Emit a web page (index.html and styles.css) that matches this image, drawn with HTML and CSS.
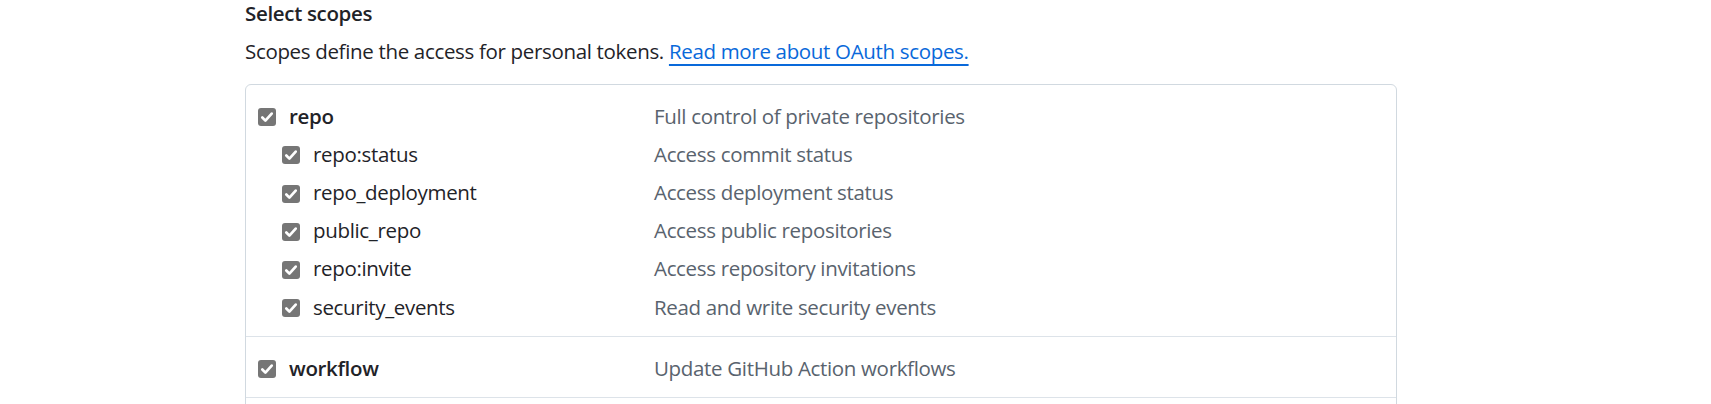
FILE: index.html
```html
<!DOCTYPE html>
<html lang="en">
<head>
<meta charset="utf-8">
<title>Select scopes</title>
<link rel="stylesheet" href="styles.css">
</head>
<body>
<main class="page">
  <section class="scopes">
    <h3 class="scopes-title">Select scopes</h3>
    <p class="scopes-note">Scopes define the access for personal tokens. <a href="#" class="link">Read more about OAuth scopes.</a></p>
    <div class="scope-box">
      <div class="scope-group">
        <div class="scope-row">
          <label class="scope-name parent"><span class="cb"><svg viewBox="0 0 18 18" width="18" height="18"><path d="M4.3 9.5 L7.4 12.6 L13.7 5.6" fill="none" stroke="#fff" stroke-width="2.7" stroke-linecap="round" stroke-linejoin="round"/></svg></span>repo</label>
          <span class="scope-desc">Full control of private repositories</span>
        </div>
        <div class="scope-row">
          <label class="scope-name child"><span class="cb"><svg viewBox="0 0 18 18" width="18" height="18"><path d="M4.3 9.5 L7.4 12.6 L13.7 5.6" fill="none" stroke="#fff" stroke-width="2.7" stroke-linecap="round" stroke-linejoin="round"/></svg></span>repo:status</label>
          <span class="scope-desc">Access commit status</span>
        </div>
        <div class="scope-row">
          <label class="scope-name child"><span class="cb"><svg viewBox="0 0 18 18" width="18" height="18"><path d="M4.3 9.5 L7.4 12.6 L13.7 5.6" fill="none" stroke="#fff" stroke-width="2.7" stroke-linecap="round" stroke-linejoin="round"/></svg></span>repo_deployment</label>
          <span class="scope-desc">Access deployment status</span>
        </div>
        <div class="scope-row">
          <label class="scope-name child"><span class="cb"><svg viewBox="0 0 18 18" width="18" height="18"><path d="M4.3 9.5 L7.4 12.6 L13.7 5.6" fill="none" stroke="#fff" stroke-width="2.7" stroke-linecap="round" stroke-linejoin="round"/></svg></span>public_repo</label>
          <span class="scope-desc">Access public repositories</span>
        </div>
        <div class="scope-row">
          <label class="scope-name child"><span class="cb"><svg viewBox="0 0 18 18" width="18" height="18"><path d="M4.3 9.5 L7.4 12.6 L13.7 5.6" fill="none" stroke="#fff" stroke-width="2.7" stroke-linecap="round" stroke-linejoin="round"/></svg></span>repo:invite</label>
          <span class="scope-desc">Access repository invitations</span>
        </div>
        <div class="scope-row">
          <label class="scope-name child"><span class="cb"><svg viewBox="0 0 18 18" width="18" height="18"><path d="M4.3 9.5 L7.4 12.6 L13.7 5.6" fill="none" stroke="#fff" stroke-width="2.7" stroke-linecap="round" stroke-linejoin="round"/></svg></span>security_events</label>
          <span class="scope-desc">Read and write security events</span>
        </div>
      </div>
      <div class="scope-group">
        <div class="scope-row">
          <label class="scope-name parent"><span class="cb"><svg viewBox="0 0 18 18" width="18" height="18"><path d="M4.3 9.5 L7.4 12.6 L13.7 5.6" fill="none" stroke="#fff" stroke-width="2.7" stroke-linecap="round" stroke-linejoin="round"/></svg></span>workflow</label>
          <span class="scope-desc">Update GitHub Action workflows</span>
        </div>
      </div>
      <div class="scope-group scope-group-more"></div>
    </div>
  </section>
</main>
</body>
</html>
```

FILE: styles.css
```css
* { box-sizing: border-box; }

html, body {
  margin: 0;
  padding: 0;
  background: #ffffff;
}

body {
  font-family: "Open Sans", "Noto Sans", "Liberation Sans", sans-serif;
  font-size: 20.5px;
  letter-spacing: -0.33px;
  color: #1f2328;
}

.page {
  padding-left: 245px;
}

.scopes {
  width: 1152px;
}

.scopes-title {
  margin: 0;
  font-size: 20.5px;
  line-height: 26px;
  font-weight: 600;
}

.scopes-note {
  margin: 10px 0 16px;
  line-height: 31.5px;
}

.link {
  color: #0969da;
  text-decoration: underline;
  text-decoration-thickness: 2px;
  text-underline-offset: 5px;
}

.scope-box {
  border: 1px solid #d1d9e0;
  border-radius: 6px;
  overflow: hidden;
}

.scope-group {
  padding: 12px 0 10px;
}

.scope-group + .scope-group {
  border-top: 1px solid #dde3e9;
}

.scope-group-more {
  height: 40px;
}

.scope-row {
  display: grid;
  grid-template-columns: 396px 1fr;
  padding-left: 12px;
  line-height: 38.2px;
}

.scope-name {
  display: flex;
  align-items: center;
  gap: 13px;
}

.scope-name.parent {
  font-weight: 600;
}

.scope-name.child {
  padding-left: 24px;
}

.cb {
  flex: none;
  width: 18px;
  height: 18px;
  margin-top: 3px;
  border-radius: 3px;
  background: #767676;
  display: flex;
}

.scope-desc {
  color: #59636e;
}
```
